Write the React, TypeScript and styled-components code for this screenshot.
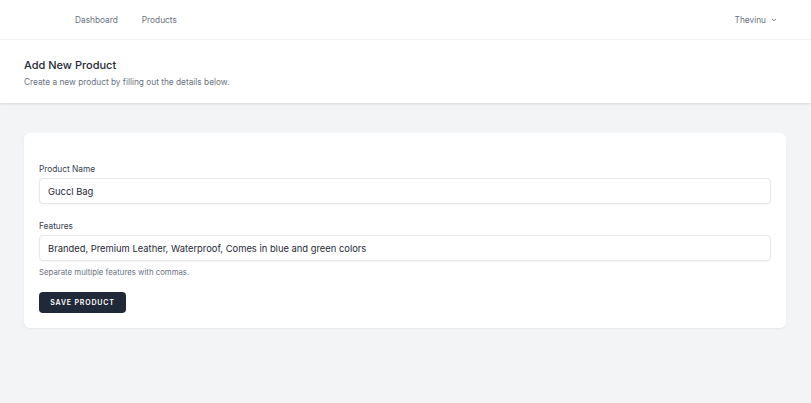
import React from "react";
import styled, { createGlobalStyle } from "styled-components";

const Global = createGlobalStyle`
  html, body { margin: 0; padding: 0; }
  body {
    background: #f3f4f6;
    font-family: "Inter", "Noto Sans", sans-serif;
    -webkit-font-smoothing: antialiased;
  }
  * { box-sizing: border-box; }
`;

const Page = styled.div`
  min-height: 403px;
  background: #f3f4f6;
`;

const Nav = styled.nav`
  height: 40px;
  background: #fff;
  border-bottom: 1px solid #f3f4f6;
  display: flex;
  align-items: center;
  justify-content: space-between;
  padding: 1px 33px 0 75px;
`;

const NavLinks = styled.div`
  display: flex;
  gap: 24px;
`;

const NavLink = styled.a`
  font-size: 8.3px;
  color: #6b7280;
  text-decoration: none;
`;

const UserMenu = styled.button`
  border: 0;
  background: none;
  padding: 0;
  font-family: inherit;
  font-size: 8.3px;
  color: #6b7280;
  display: flex;
  align-items: center;
  gap: 4px;
`;

const Header = styled.header`
  background: #fff;
  height: 63px;
  padding: 18px 24px 0;
  box-shadow: 0 1px 3px rgba(0, 0, 0, 0.08), 0 1px 2px rgba(0, 0, 0, 0.05);
`;

const Title = styled.h2`
  margin: 0;
  font-size: 11px;
  font-weight: 500;
  color: #1f2937;
  line-height: 14px;
`;

const Subtitle = styled.p`
  margin: 5px 0 0;
  font-size: 8.3px;
  color: #6b7280;
  line-height: 11px;
`;

const Main = styled.main`
  padding: 30px 25px 0 24px;
`;

const Card = styled.section`
  background: #fff;
  border-radius: 6px;
  box-shadow: 0 1px 2px rgba(0, 0, 0, 0.05);
  padding: 31px 15px 15px;
`;

const Form = styled.form`
  display: flex;
  flex-direction: column;
`;

const Field = styled.div<{ $gap?: number }>`
  display: flex;
  flex-direction: column;
  margin-bottom: ${(p) => p.$gap ?? 17}px;
`;

const Label = styled.label`
  font-size: 8.3px;
  font-weight: 400;
  color: #374151;
  line-height: 11px;
  margin-bottom: 3px;
`;

const Input = styled.input`
  height: 26px;
  border: 1px solid #e5e7eb;
  border-radius: 4px;
  padding: 0 8px;
  font-family: inherit;
  font-size: 9.4px;
  color: #1f2937;
  background: #fff;
  box-shadow: 0 1px 2px rgba(0, 0, 0, 0.04);
  outline: none;
`;

const Help = styled.p`
  margin: 6px 0 0;
  font-size: 7.8px;
  color: #6b7280;
  line-height: 10px;
`;

const Button = styled.button`
  align-self: flex-start;
  width: 87px;
  height: 21px;
  border: 0;
  border-radius: 4px;
  background: #1f2937;
  color: #fff;
  font-family: inherit;
  font-size: 7px;
  font-weight: 600;
  letter-spacing: 0.12em;
  text-transform: uppercase;
`;

export default function App() {
  return (
    <Page>
      <Global />
      <Nav>
        <NavLinks>
          <NavLink href="#">Dashboard</NavLink>
          <NavLink href="#">Products</NavLink>
        </NavLinks>
        <UserMenu>
          Thevinu
          <svg width="8" height="8" viewBox="0 0 20 20" fill="currentColor">
            <path
              fillRule="evenodd"
              d="M5.293 7.293a1 1 0 011.414 0L10 10.586l3.293-3.293a1 1 0 111.414 1.414l-4 4a1 1 0 01-1.414 0l-4-4a1 1 0 010-1.414z"
              clipRule="evenodd"
            />
          </svg>
        </UserMenu>
      </Nav>
      <Header>
        <Title>Add New Product</Title>
        <Subtitle>Create a new product by filling out the details below.</Subtitle>
      </Header>
      <Main>
        <Card>
          <Form onSubmit={(e) => e.preventDefault()}>
            <Field>
              <Label>Product Name</Label>
              <Input defaultValue="Guccl Bag" />
            </Field>
            <Field $gap={15}>
              <Label>Features</Label>
              <Input defaultValue="Branded, Premium Leather, Waterproof, Comes in blue and green colors" />
              <Help>Separate multiple features with commas.</Help>
            </Field>
            <Button type="submit">Save Product</Button>
          </Form>
        </Card>
      </Main>
    </Page>
  );
}
